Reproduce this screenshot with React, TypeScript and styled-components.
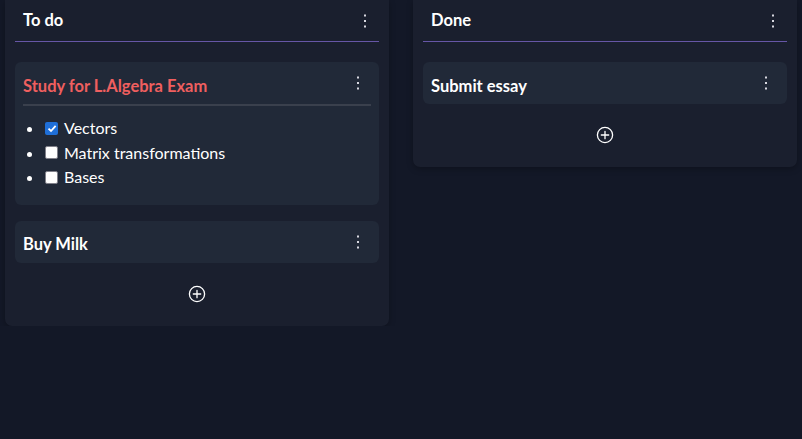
import React from "react";
import styled, { createGlobalStyle } from "styled-components";

const Global = createGlobalStyle`
  html, body { margin: 0; padding: 0; background: #131827; }
  body { font-family: Lato, "Noto Sans", sans-serif; color: #fff; }
`;

const Board = styled.div`
  display: flex;
  align-items: flex-start;
  gap: 24px;
  padding: 0 5px;
`;

const Column = styled.section`
  width: 384px;
  background: #1a1f2e;
  border-radius: 0 0 7px 7px;
  padding: 0 10px 23px;
  box-sizing: border-box;
  box-shadow: 0 2px 6px rgba(0, 0, 0, 0.25);
`;

const ColumnHeader = styled.header`
  display: flex;
  align-items: center;
  justify-content: space-between;
  height: 41px;
  padding: 0 8px;
  border-bottom: 1px solid #6656a6;
  margin-bottom: 20px;
`;

const ColumnTitle = styled.h2`
  margin: 0;
  font-size: 16.5px;
  font-weight: 700;
  padding-bottom: 1px;
`;

const Card = styled.article`
  background: #212938;
  border-radius: 6px;
  padding: 0 8px;
  margin-bottom: 16px;
`;

const CardHeader = styled.div<{ $divided?: boolean }>`
  display: flex;
  align-items: center;
  justify-content: space-between;
  height: 42px;
  border-bottom: ${(p) => (p.$divided ? "2px solid #3a404d" : "none")};
`;

const CardTitle = styled.h3<{ $accent?: boolean }>`
  margin: 0;
  font-size: 16.5px;
  font-weight: 700;
  padding-top: 5px;
  color: ${(p) => (p.$accent ? "#ef5f5f" : "#ffffff")};
`;

const Kebab = styled.button<{ $inset?: boolean }>`
  background: none;
  border: none;
  padding: 0;
  margin-right: ${(p) => (p.$inset ? "7px" : "0")};
  width: 12px;
  display: flex;
  justify-content: center;
  cursor: pointer;
`;

const List = styled.ul`
  margin: 0;
  padding: 10px 0 15px 21px;
  list-style: disc;
`;

const Item = styled.li`
  font-size: 16px;
  height: 24.5px;
  line-height: 24.5px;
  &::marker { color: #fff; }
`;

const Label = styled.label`
  display: inline-flex;
  align-items: center;
  gap: 6px;
  vertical-align: top;
  height: 24.5px;
`;

const Box = styled.span<{ $checked?: boolean }>`
  width: 13px;
  height: 13px;
  box-sizing: border-box;
  border-radius: 2px;
  margin-left: 1px;
  background: ${(p) => (p.$checked ? "#1f6fd8" : "#ffffff")};
  border: ${(p) => (p.$checked ? "none" : "1px solid #80808a")};
  display: inline-flex;
  align-items: center;
  justify-content: center;
`;

const AddRow = styled.div`
  display: flex;
  justify-content: center;
  padding-top: 6px;
`;

const AddButton = styled.button`
  background: none;
  border: none;
  padding: 0;
  width: 18px;
  height: 18px;
  display: flex;
  cursor: pointer;
`;

const Dots = () => (
  <svg width="4" height="14" viewBox="0 0 4 14">
    <rect x="1" y="0.5" width="2" height="2" fill="#d8d8e0" />
    <rect x="1" y="6" width="2" height="2" fill="#d8d8e0" />
    <rect x="1" y="11.5" width="2" height="2" fill="#d8d8e0" />
  </svg>
);

const PlusCircle = () => (
  <svg width="18" height="18" viewBox="0 0 18 18" fill="none" stroke="#ffffff" strokeWidth="1.3">
    <circle cx="9" cy="9" r="7.6" />
    <path d="M9 5.3v7.4M5.3 9h7.4" strokeLinecap="round" />
  </svg>
);

const Check = () => (
  <svg width="10" height="9" viewBox="0 0 10 9">
    <path d="M1.5 4.6 L4 7 L8.6 1.8" stroke="#fff" strokeWidth="1.8" fill="none" />
  </svg>
);

const Checkbox = ({ checked, text }: { checked?: boolean; text: string }) => (
  <Label>
    <Box $checked={checked}>{checked && <Check />}</Box>
    {text}
  </Label>
);

export default function App() {
  return (
    <>
      <Global />
      <Board>
        <Column>
          <ColumnHeader>
            <ColumnTitle>To do</ColumnTitle>
            <Kebab aria-label="menu"><Dots /></Kebab>
          </ColumnHeader>
          <Card>
            <CardHeader $divided>
              <CardTitle $accent>Study for L.Algebra Exam</CardTitle>
              <Kebab $inset aria-label="menu"><Dots /></Kebab>
            </CardHeader>
            <List>
              <Item><Checkbox checked text="Vectors" /></Item>
              <Item><Checkbox text="Matrix transformations" /></Item>
              <Item><Checkbox text="Bases" /></Item>
            </List>
          </Card>
          <Card>
            <CardHeader>
              <CardTitle>Buy Milk</CardTitle>
              <Kebab $inset aria-label="menu"><Dots /></Kebab>
            </CardHeader>
          </Card>
          <AddRow>
            <AddButton aria-label="add"><PlusCircle /></AddButton>
          </AddRow>
        </Column>
        <Column>
          <ColumnHeader>
            <ColumnTitle>Done</ColumnTitle>
            <Kebab aria-label="menu"><Dots /></Kebab>
          </ColumnHeader>
          <Card>
            <CardHeader>
              <CardTitle>Submit essay</CardTitle>
              <Kebab $inset aria-label="menu"><Dots /></Kebab>
            </CardHeader>
          </Card>
          <AddRow>
            <AddButton aria-label="add"><PlusCircle /></AddButton>
          </AddRow>
        </Column>
      </Board>
    </>
  );
}
